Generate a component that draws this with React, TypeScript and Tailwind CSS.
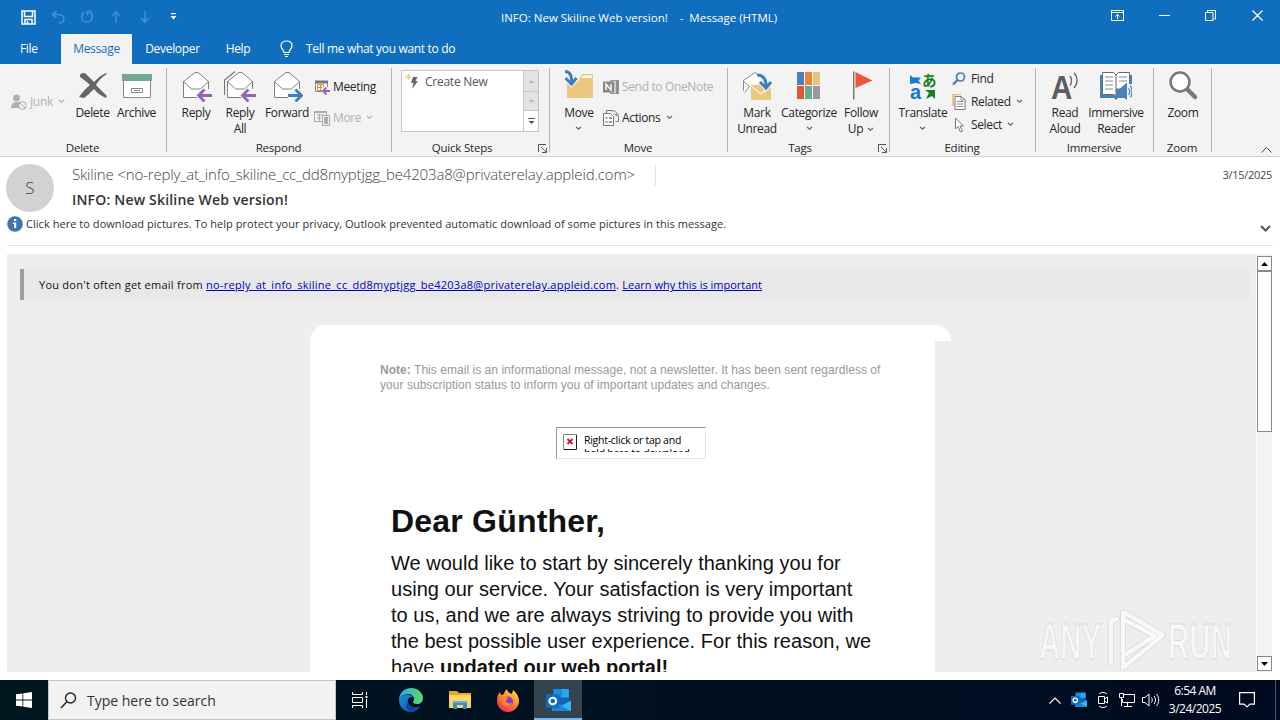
// src/App.tsx
import React from 'react';

interface BigButtonProps {
  icon: React.ReactNode;
  lines: string[];
  width: string;
  caret?: 'below' | 'inline';
}

const Caret: React.FC<{ className?: string }> = ({ className = 'text-[#666]' }) => (
  <svg width="7" height="5" viewBox="0 0 7 5" className={className} fill="none" stroke="currentColor" strokeWidth="1.2">
    <path d="M1 1l2.5 2.3L6 1" />
  </svg>
);

const BigButton: React.FC<BigButtonProps> = ({ icon, lines, width, caret }) => (
  <div className={`flex shrink-0 flex-col items-center pt-1.5 ${width}`}>
    <div className="h-8 w-8">{icon}</div>
    <div className="mt-[3px] flex flex-col items-center">
      {lines.map((line, i) => (
        <div key={line} className="flex items-center gap-1 whitespace-nowrap leading-4">
          {line}
          {caret === 'inline' && i === lines.length - 1 && <Caret />}
        </div>
      ))}
      {caret === 'below' && <div className="flex h-[14px] items-center"><Caret /></div>}
    </div>
  </div>
);

interface SmallButtonProps {
  icon: React.ReactNode;
  label: string;
  height: string;
  caret?: boolean;
  disabled?: boolean;
}

const SmallButton: React.FC<SmallButtonProps> = ({ icon, label, height, caret, disabled }) => (
  <div className={`flex items-center whitespace-nowrap ${height} ${disabled ? 'text-[#b1b1b1]' : ''}`}>
    <div className="mr-[3px] h-4 w-4 shrink-0">{icon}</div>
    <span>{label}</span>
    {caret && <span className="ml-[5px]"><Caret className={disabled ? 'text-[#b1b1b1]' : 'text-[#666]'} /></span>}
  </div>
);

interface GroupProps {
  title: string;
  width: string;
  padding?: string;
  launcher?: boolean;
  children: React.ReactNode;
}

const Group: React.FC<GroupProps> = ({ title, width, padding = 'pl-[7px]', launcher, children }) => (
  <div className={`relative flex shrink-0 flex-col ${width}`}>
    <div className={`flex h-[76px] ${padding}`}>{children}</div>
    <div className={`flex h-4 items-center justify-center text-[11.5px] tracking-[-0.2px] ${launcher ? 'pr-[18px]' : 'pr-0.5'}`}>{title}</div>
    {launcher && (
      <svg className="absolute right-[3px] bottom-[3px]" width="9" height="9" viewBox="0 0 9 9" fill="none" stroke="#555">
        <path d="M.5 8V.5H8M3 3l5 5M8.5 4v4.5H4" />
      </svg>
    )}
    <div className="absolute top-1 right-0 h-[84px] w-px bg-[#b5b5b5]" />
  </div>
);

// Ribbon icons

const Envelope: React.FC<{ arrow?: 'left' | 'right'; stacked?: boolean }> = ({ arrow, stacked }) => (
  <svg width="32" height="32" viewBox="0 0 32 32" fill="none">
    {stacked && <path d="M.5 25V10L11 1.500M2 27" stroke="#777" strokeWidth="1.200" />}
    <path d="M3.500 27.500v-16L15 2.500h3l10.500 9v16z" fill="#fff" stroke="#808080" />
    <path d="M3.500 11.500l8 7.500h9l8-7.500" stroke="#808080" />
    {arrow && <path d="M17 32v-9l4-4h10v13z" fill="#f3f3f3" />}
    {arrow === 'left' && (
      <path d="M32 25.500H18.500M24.500 19.500L18.500 25.500l6 6" stroke="#9560b8" strokeWidth="2.800" />
    )}
    {arrow === 'right' && (
      <path d="M17 25.500h13.500M24.500 19.500l6 6-6 6" stroke="#3e7ebd" strokeWidth="2.800" />
    )}
  </svg>
);

const DeleteIcon = () => (
  <svg width="32" height="32" viewBox="0 0 32 32">
    <path d="M3 5c1-2 4-3 6-1l8 8c4-4 7-7 12-9l1 1c-5 3-8 6-11 11l11 11-1 2c-5-2-9-5-12-9-4 4-7 7-10 9l-5-1c3-4 6-8 11-12C10 12 6 9 3 7z" fill="#666" />
  </svg>
);

const ArchiveIcon = () => (
  <svg width="32" height="32" viewBox="0 0 32 32">
    <path d="M2.500 10v17.500h27V10" fill="#fff" stroke="#888" />
    <path d="M1 4h30v7H1z" fill="#72a695" />
    <path d="M10.500 18.500h11v4h-11z" fill="#fff" stroke="#888" />
    <path d="M13 20.500h6" stroke="#888" />
  </svg>
);

const JunkIcon = () => (
  <svg width="16" height="16" viewBox="0 0 16 16">
    <circle cx="5.500" cy="4" r="3.500" fill="#b1b1b1" />
    <path d="M0 14c0-5 3-6 6-6 2 0 3 .5 4 1v5z" fill="#b1b1b1" />
    <circle cx="11.500" cy="11.500" r="3.800" fill="#f3f3f3" stroke="#aaa" />
    <path d="M9 9l5 5" stroke="#aaa" />
  </svg>
);

const MeetingIcon = () => (
  <svg width="16" height="16" viewBox="0 0 16 16">
    <path d="M1.500 3.500h12v9h-12z" fill="#fff" stroke="#888" />
    <path d="M1 1.500h13v3H1z" fill="#777" />
    <path d="M3.500 5.500h6v6h-6zM6.500 5v7M3 8.500h7" fill="none" stroke="#d98b3c" />
    <path d="M8 8h8v8H8z" fill="#f3f3f3" />
    <path d="M16 12H9.500M12.500 8.500L9 12l3.500 3.500" fill="none" stroke="#9560b8" strokeWidth="1.800" />
  </svg>
);

const MoreIcon = () => (
  <svg width="16" height="16" viewBox="0 0 16 16" fill="none" stroke="#aaa">
    <path d="M.5 1.500h12v10H.5zM3 5h7M3 8h4M5.500 4v7M1 2.500h11" />
    <path d="M8.500 5.500h7v10h-7z" fill="#f3f3f3" />
    <path d="M10.500 7.500h3v6h-3z" fill="#aaa" />
  </svg>
);

const MoveIcon = () => (
  <svg width="32" height="32" viewBox="0 0 32 32">
    <path d="M4 28h26V4H19l-4 8H4z" fill="#ecc87f" />
    <path d="M20 5.500h9V8H18.500z" fill="#fff" />
    <path d="M2 1c5 0 7 4 6.500 12M2.500 8l6 6 5-6" fill="none" stroke="#f3f3f3" strokeWidth="5" />
    <path d="M2 1.500c5 0 7 4 6.500 12M2.500 8l6 6 5-6" fill="none" stroke="#3e7ebd" strokeWidth="3" />
  </svg>
);

const OneNoteIcon = () => (
  <svg width="16" height="16" viewBox="0 0 16 16">
    <path d="M7.500 1.500h8v13h-8z" fill="#ccc" stroke="#999" />
    <path d="M0 2.500h11v11H0z" fill="#888" />
    <path d="M3 11V5l5 6V5" fill="none" stroke="#fff" strokeWidth="1.400" />
    <path d="M14.200 1v14" stroke="#888" strokeWidth="2" />
  </svg>
);

const ActionsIcon = () => (
  <svg width="16" height="16" viewBox="0 0 16 16" fill="none" stroke="#777">
    <path d="M.5 3.500h7l3 3v9H.5z" fill="#fff" />
    <path d="M2.500 8h2M6 8h3M2.500 12h2M6 12h3" strokeWidth="1.500" />
    <path d="M3.500 3V.5h6M12.500 11.500h3V6M8 1c4-1 6 1 6 4.500M11 3.500L14 6l2-2.500" />
  </svg>
);

const MarkUnreadIcon = () => (
  <svg width="32" height="32" viewBox="0 0 32 32">
    <path d="M2.500 20.500v-10L14 2.500l9 6" fill="#fff" stroke="#888" />
    <path d="M2.500 20.500v-9l6 5-5 6" fill="#fff" stroke="#888" />
    <path d="M10 15h20v15H10z" fill="#ecc87f" />
    <path d="M10 16l10 8 10-8" fill="none" stroke="#fbf1dc" strokeWidth="1.500" />
    <path d="M16 5c6 0 9 4 9 11M19 12l6 6 5-6" fill="none" stroke="#f3f3f3" strokeWidth="5" />
    <path d="M16 5c6 0 9 4 9 11M19 12l6 6 5-6" fill="none" stroke="#3e7ebd" strokeWidth="3" />
  </svg>
);

const CategorizeIcon = () => (
  <svg width="32" height="32" viewBox="0 0 32 32">
    <path d="M4 2h7v13H4z" fill="#4a80bd" />
    <path d="M12 2h7v13h-7z" fill="#e8873a" />
    <path d="M20 2h7v13h-7z" fill="#e6c27c" />
    <path d="M4 16h7v13H4z" fill="#dd5738" />
    <path d="M12 16h7v13h-7z" fill="#6ca894" />
    <path d="M20 16h7v13h-7z" fill="#999" />
  </svg>
);

const FlagIcon = () => (
  <svg width="32" height="32" viewBox="0 0 32 32">
    <path d="M8 1.500h1.500v28H8z" fill="#777" />
    <path d="M10.500 2l17 8.500-17 7.500z" fill="#e8593b" />
  </svg>
);

const TranslateIcon = () => (
  <svg className="overflow-visible" width="32" height="32" viewBox="0 0 32 32">
    <path d="M3 5l3 2.500h8l-2.500 3L14 14l-5-1-6 1z" fill="#1679d3" />
    <path d="M18 20h10v9l-3-3-6 3 3-6z" fill="#128022" />
    <text x="15" y="15.500" fontSize="14.500" fontWeight="700" fill="#128022" fontFamily="Noto Sans CJK JP, sans-serif">あ</text>
    <text x="3" y="29" fontSize="20" fontWeight="600" fill="#1679d3" fontFamily="Liberation Sans, sans-serif">a</text>
  </svg>
);

const FindIcon = () => (
  <svg width="16" height="16" viewBox="0 0 16 16" fill="none">
    <circle cx="8.500" cy="6" r="4" stroke="#4a79ad" strokeWidth="1.700" />
    <path d="M5.500 9L1 13.500" stroke="#4a79ad" strokeWidth="2.300" />
  </svg>
);

const RelatedIcon = () => (
  <svg width="16" height="16" viewBox="0 0 16 16" fill="none">
    <path d="M1 12V.5H9" stroke="#e5b878" strokeWidth="1.500" />
    <path d="M3 2.500h6l4 3v10H3z" fill="#fff" stroke="#777" />
    <path d="M5 7.500h6M5 10h6M5 12.500h6M9 3v3h4" stroke="#888" />
  </svg>
);

const SelectIcon = () => (
  <svg width="16" height="16" viewBox="0 0 16 16">
    <path d="M3.500 1v11L6 9.500 8.500 15l2-1L8 9h3.500z" fill="#fff" stroke="#777" />
  </svg>
);

const ReadAloudIcon = () => (
  <svg className="overflow-visible" width="32" height="32" viewBox="0 0 32 32">
    <text x="2" y="28.500" fontSize="33" fontWeight="700" fill="#5e5e5e" fontFamily="Liberation Sans, sans-serif" textLength="21" lengthAdjust="spacingAndGlyphs">A</text>
    <path d="M21 6c2 2.500 2 7 0 9.500M25 3c4 4 4 11 0 15" fill="none" stroke="#666" strokeWidth="1.300" />
  </svg>
);

const ReaderIcon = () => (
  <svg width="32" height="32" viewBox="0 0 32 32">
    <path d="M0 5h32v23H18l-2 2-2-2H0z" fill="#4a80b8" />
    <path d="M2.500 2.500h11L16 5l2.500-2.500h11v22h-11L16 26l-2.500-1.500h-11z" fill="#fff" stroke="#666" />
    <path d="M16 5v20" stroke="#666" />
    <path d="M5 7h8M5 11h8M5 15h8M5 19h8M19 7h8M19 11h8" stroke="#888" />
    <path d="M25 14h7v17h-7z" fill="#f3f3f3" />
    <path d="M16 18.500h4l7-6V30l-7-5h-4z" fill="#4a80b8" />
    <path d="M28.500 18c1.500 2 1.500 5 0 7M30.500 15.500c2 4 2 8 0 12" fill="none" stroke="#4a80b8" strokeWidth="1.200" />
  </svg>
);

const ZoomIcon = () => (
  <svg width="32" height="32" viewBox="0 0 32 32">
    <path d="M20 19l8 8" stroke="#777" strokeWidth="4.500" strokeLinecap="round" />
    <circle cx="13" cy="12" r="9.500" fill="#fff" stroke="#777" strokeWidth="2.500" />
  </svg>
);

// Taskbar icons

const OutlookIcon: React.FC<{ size: number }> = ({ size }) => (
  <svg width={size} height={size} viewBox="0 0 24 24">
    <path d="M7 1h15v17H7z" fill="#1066b5" />
    <path d="M7 1h8v8H7z" fill="#1490df" />
    <path d="M15 1h7v8h-7z" fill="#28a8ea" />
    <path d="M6 12l9 5 9-5v10H6z" fill="#35b8f1" />
    <path d="M6 13l18 9H6z" fill="#1a86d9" />
    <path d="M0 6h13v13H0z" fill="#0f6cbd" />
    <circle cx="6.500" cy="12.500" r="3.200" fill="none" stroke="#fff" strokeWidth="2" />
  </svg>
);

const EdgeIcon = () => (
  <svg width="24" height="24" viewBox="0 0 24 24">
    <defs>
      <linearGradient id="edgeTop" x1="0" y1=".3" x2="1" y2=".4">
        <stop offset="0" stopColor="#2ba9e8" />
        <stop offset="1" stopColor="#5fd866" />
      </linearGradient>
      <linearGradient id="edgeLow" x1="0" y1="0" x2="1" y2="1">
        <stop offset="0" stopColor="#1b8ee0" />
        <stop offset="1" stopColor="#114a9b" />
      </linearGradient>
    </defs>
    <path d="M0 12C0 5 5 0 12 0s12 5 12 10c0 4-3 6-6 6-3 0-4-1-4-2s1-1 1-3c0-3-3-5-6-5-4 0-8 2-9 6z" fill="url(#edgeTop)" />
    <path d="M0 12C1 8 4 6.500 8 6.500c3 0 5 1 6 3-4-1-6 2-5 5 1 4 6 6 12 4-2 3-5 5.500-9 5.500C5 24 0 19 0 12z" fill="url(#edgeLow)" />
    <path d="M9 14c1 5 7 7 12.500 4.500C19 22 16 24 12 24c-5-2-6-7-3-10z" fill="#0d4a97" />
  </svg>
);

const ExplorerIcon = () => (
  <svg width="22" height="20" viewBox="0 0 22 20">
    <path d="M0 1h8l2 2h12v15H0z" fill="#e9a820" />
    <path d="M0 5h22v13H0z" fill="#fcd462" />
    <path d="M4 19v-7h14v7h-4v-4H8v4z" fill="#3a8bc9" />
    <path d="M4 11h14v2H4z" fill="#62b0e2" />
  </svg>
);

const FirefoxIcon = () => (
  <svg width="24" height="24" viewBox="0 0 24 24">
    <defs>
      <linearGradient id="fox" x1=".8" y1="0" x2=".2" y2="1">
        <stop offset="0" stopColor="#ffe345" />
        <stop offset=".45" stopColor="#ff8a22" />
        <stop offset="1" stopColor="#ef2160" />
      </linearGradient>
    </defs>
    <path d="M1 13c0-4 1-7 3-9l1 3 3-1c0-2 2-4 3-5 0 2 2 4 5 5l1-4c4 3 6 7 6 11 0 6-5 11-11 11S1 19 1 13z" fill="url(#fox)" />
    <circle cx="12" cy="13.500" r="5" fill="#8439d2" />
    <path d="M6 9c3-1 5 0 7 1-2 1-3 1-3 3s3 3 6 2c-1 4-8 5-10 0-1-2-1-4 0-6z" fill="#ff8a22" />
  </svg>
);

const WindowsIcon = () => (
  <svg width="16" height="16" viewBox="0 0 16 16" fill="#fff">
    <path d="M0 2.300l6.500-.9v6.200H0zM7.300 1.300L16 0v7.600H7.300zM0 8.400h6.500v6.200L0 13.700zM7.300 8.400H16V16l-8.700-1.300z" />
  </svg>
);

const TitleBar = () => (
  <div className="relative flex h-[34px] items-center justify-between text-white">
    <div className="flex pl-[14px] text-[#3c8fdc]">
      <div className="flex w-[29px] justify-center">
        <svg width="15" height="15" viewBox="0 0 15 15" fill="none" stroke="#fff" strokeWidth="1.500">
          <path d="M1 1h13v13H1zM3.500 1v5.500h8V1M4 14v-4.500h7V14M6.500 11v3" />
        </svg>
      </div>
      <div className="flex w-[29px] justify-center">
        <svg width="14" height="14" viewBox="0 0 14 14" fill="none" stroke="currentColor" strokeWidth="1.700">
          <path d="M5.500 1L1.500 4.500l4 3.500M2 4.500h6c3 0 5 2 5 4.300S11 13 8 13" />
        </svg>
      </div>
      <div className="flex w-[29px] justify-center">
        <svg width="14" height="14" viewBox="0 0 14 14" fill="none" stroke="currentColor" strokeWidth="1.700">
          <path d="M4 2.500a5.300 5.300 0 1 0 6 0M7.500 5.500V1.500H12" />
        </svg>
      </div>
      <div className="flex w-[29px] justify-center">
        <svg width="12" height="14" viewBox="0 0 12 14" fill="none" stroke="currentColor" strokeWidth="1.600">
          <path d="M6 13V2M2 6l4-4 4 4" />
        </svg>
      </div>
      <div className="flex w-[29px] justify-center">
        <svg width="12" height="14" viewBox="0 0 12 14" fill="none" stroke="currentColor" strokeWidth="1.600">
          <path d="M6 1v11M2 8l4 4 4-4" />
        </svg>
      </div>
      <div className="flex w-[29px] items-center justify-center">
        <svg width="7" height="8" viewBox="0 0 7 8" fill="#fff">
          <path d="M1 0h5v1.200H1zM.5 3h6L3.500 6.500z" />
        </svg>
      </div>
    </div>
    <div className="absolute top-[9px] left-[501px] whitespace-pre text-[11.5px] leading-[18px]">INFO: New Skiline Web version!    -  Message (HTML)</div>
    <div className="mr-[17px] mb-1 flex items-center">
      <svg className="mr-[35px]" width="13" height="11" viewBox="0 0 13 11" fill="none" stroke="#fff">
        <path d="M.5.5h12v10H.5zM1 2.500h11M6.500 9V4.500M4.500 6.500l2-2 2 2" />
      </svg>
      <svg className="mr-[35px]" width="11" height="11" viewBox="0 0 11 11" stroke="#fff">
        <path d="M0 5.500h11" />
      </svg>
      <svg className="mr-[36px]" width="11" height="11" viewBox="0 0 11 11" fill="none" stroke="#fff">
        <path d="M.5 2.500h7.500v8H.5zM2.500 2V.5h8V9H8.500" />
      </svg>
      <svg width="11" height="11" viewBox="0 0 11 11" stroke="#fff" strokeWidth="1.200">
        <path d="M.5.5l10 10M10.500.5l-10 10" />
      </svg>
    </div>
  </div>
);

const Tabs = () => (
  <div className="flex h-[30px] items-center tracking-[-0.32px] text-white">
    <div className="w-[61px] pl-5">File</div>
    <div className="flex h-full w-[71px] items-center justify-center bg-[#f3f3f3] text-[#1a6cb8]">Message</div>
    <div className="w-[81px] text-center">Developer</div>
    <div className="w-[50px] text-center">Help</div>
    <svg className="ml-[17px]" width="13" height="18" viewBox="0 0 13 18" fill="none" stroke="#fff" strokeWidth="1.200">
      <path d="M4 12.500c0-2.500-3-3.500-3-7C1 2.500 3.500 1 6.500 1S12 2.500 12 5.500c0 3.500-3 4.500-3 7zM4 14.500h5M5 16.500h3" />
    </svg>
    <div className="ml-[13px] whitespace-nowrap">Tell me what you want to do</div>
  </div>
);

const Ribbon = () => (
  <div className="relative flex h-[93px] border-b border-[#d2d0ce] bg-[#f3f3f3] tracking-[-0.35px]">
    <Group title="Delete" width="w-[167px]" padding="pl-[11px]">
      <div className="w-[55px] pt-[22px]">
        <SmallButton icon={<JunkIcon />} label="Junk" height="h-[31px]" caret disabled />
      </div>
      <BigButton icon={<DeleteIcon />} lines={['Delete']} width="w-[53px]" />
      <BigButton icon={<ArchiveIcon />} lines={['Archive']} width="w-[35px]" />
    </Group>
    <Group title="Respond" width="w-[225px]">
      <BigButton icon={<Envelope arrow="left" />} lines={['Reply']} width="w-[44px]" />
      <BigButton icon={<Envelope arrow="left" stacked />} lines={['Reply', 'All']} width="w-[44px]" />
      <BigButton icon={<Envelope arrow="right" />} lines={['Forward']} width="w-[50px]" />
      <div className="pt-[7px] pl-0.5">
        <SmallButton icon={<MeetingIcon />} label="Meeting" height="h-[31px]" />
        <SmallButton icon={<MoreIcon />} label="More" height="h-[31px]" caret disabled />
      </div>
    </Group>
    <Group title="Quick Steps" width="w-[158px]" padding="pl-[9px] pt-1.5" launcher>
      <div className="flex h-[62px] w-[138px] border border-[#c6c6c6] bg-white">
        <div className="flex grow items-start gap-1 pt-[3px] pl-[3px] text-[#555]">
          <svg width="16" height="16" viewBox="0 0 16 16">
            <path d="M8 3h4.500l-2 4H13l-6 8 1.500-6H6z" fill="#666" />
            <path d="M3.500 0v6M.5 3h6M1.500 1l4 4M5.500 1l-4 4" stroke="#ecca8f" />
          </svg>
          <span className="leading-4 tracking-[-0.25px]">Create New</span>
        </div>
        <div className="flex w-[15px] flex-col border-l border-[#c6c6c6] text-[#b5b5b5]">
          <div className="flex h-5 items-center justify-center bg-[#e3e3e3]">
            <svg width="5" height="3" viewBox="0 0 5 3" fill="currentColor"><path d="M0 3L2.500 0 5 3z" /></svg>
          </div>
          <div className="flex h-5 items-center justify-center border-y border-[#c6c6c6] bg-[#e3e3e3]">
            <svg width="5" height="3" viewBox="0 0 5 3" fill="currentColor"><path d="M0 0h5L2.500 3z" /></svg>
          </div>
          <div className="flex grow items-center justify-center text-[#555]">
            <svg width="7" height="7" viewBox="0 0 7 7" fill="currentColor"><path d="M0 0h7v1H0zM.5 3h6l-3 3z" /></svg>
          </div>
        </div>
      </div>
    </Group>
    <Group title="Move" width="w-[178px]">
      <BigButton icon={<MoveIcon />} lines={['Move']} width="w-[44px]" caret="below" />
      <div className="pt-[7px] pl-0.5">
        <SmallButton icon={<OneNoteIcon />} label="Send to OneNote" height="h-[31px]" disabled />
        <SmallButton icon={<ActionsIcon />} label="Actions" height="h-[31px]" caret />
      </div>
    </Group>
    <Group title="Tags" width="w-[162px]" launcher>
      <BigButton icon={<MarkUnreadIcon />} lines={['Mark', 'Unread']} width="w-[44px]" />
      <BigButton icon={<CategorizeIcon />} lines={['Categorize']} width="w-[60px]" caret="below" />
      <BigButton icon={<FlagIcon />} lines={['Follow', 'Up']} width="w-[44px]" caret="inline" />
    </Group>
    <Group title="Editing" width="w-[146px]">
      <BigButton icon={<TranslateIcon />} lines={['Translate']} width="w-[52px]" caret="below" />
      <div className="pt-[3px] pl-[3px]">
        <SmallButton icon={<FindIcon />} label="Find" height="h-[23px]" />
        <SmallButton icon={<RelatedIcon />} label="Related" height="h-[23px]" caret />
        <SmallButton icon={<SelectIcon />} label="Select" height="h-[23px]" caret />
      </div>
    </Group>
    <Group title="Immersive" width="w-[118px]">
      <BigButton icon={<ReadAloudIcon />} lines={['Read', 'Aloud']} width="w-[44px]" />
      <BigButton icon={<ReaderIcon />} lines={['Immersive', 'Reader']} width="w-[58px]" />
    </Group>
    <Group title="Zoom" width="w-[58px]">
      <BigButton icon={<ZoomIcon />} lines={['Zoom']} width="w-[44px]" />
    </Group>
    <svg className="absolute right-2 bottom-[3px]" width="11" height="6" viewBox="0 0 11 6" fill="none" stroke="#444">
      <path d="M.5 5.500l5-5 5 5" />
    </svg>
  </div>
);

const MessageHeader = () => (
  <div className="mx-[7px] h-[89px] border-b border-[#e1e1e1]">
    <div className="flex h-[55px] pt-[7px]">
      <div className="-ml-px flex h-12 w-12 items-center justify-center rounded-full bg-[#d2d2d2] text-[17px] font-light text-[#444]">S</div>
      <div className="ml-[18px] grow">
        <div className="flex items-center">
          <div className="flex h-[22px] w-[584px] items-center border-r border-[#e6e6e6] pb-0.5 text-[15px] font-light tracking-[-0.16px] whitespace-nowrap text-[#444]">
            Skiline &lt;no-reply_at_info_skiline_cc_dd8myptjgg_be4203a8@privaterelay.appleid.com&gt;
          </div>
          <div className="grow pr-px text-right text-[11px] tracking-[-0.3px] text-[#444]">3/15/2025</div>
        </div>
        <div className="mt-1 text-[14px] leading-5 font-semibold tracking-[0.18px] text-[#333]">INFO: New Skiline Web version!</div>
      </div>
    </div>
    <div className="flex h-6 items-center">
      <svg width="16" height="16" viewBox="0 0 16 16">
        <circle cx="8" cy="8" r="7.800" fill="#3f75b0" />
        <path d="M7 3h2.200v2H7zM6 6.500h3.200V12H7V8H6z" fill="#fff" />
      </svg>
      <div className="ml-[3px] grow text-[11px] tracking-[0.045px] whitespace-nowrap text-[#333]">
        Click here to download pictures. To help protect your privacy, Outlook prevented automatic download of some pictures in this message.
      </div>
      <svg className="mt-2.5 mr-0.5" width="11" height="8" viewBox="0 0 11 8" fill="none" stroke="#555" strokeWidth="2">
        <path d="M1 1l4.500 4.500L10 1" />
      </svg>
    </div>
  </div>
);

const Watermark = () => (
  <svg className="absolute right-[19px] bottom-0" width="200" height="66" viewBox="0 0 200 66">
    <g fontFamily="Liberation Sans, sans-serif" fontSize="50" fontWeight="700" fill="#f7f7f7" stroke="#d9d9d9" strokeWidth=".8">
      <text x="2" y="53" textLength="62" lengthAdjust="spacingAndGlyphs">ANY</text>
      <text x="131" y="53" textLength="64" lengthAdjust="spacingAndGlyphs">RUN</text>
    </g>
    <g fill="none" strokeLinejoin="round" strokeLinecap="round">
      <path d="M74 57V15l6-2M86 47V6l40 23-40 33V50l32-20-32-17" stroke="#d6d6d6" strokeWidth="6" />
      <path d="M74 57V15l6-2M86 47V6l40 23-40 33V50l32-20-32-17" stroke="#f8f8f8" strokeWidth="4.500" />
    </g>
  </svg>
);

const Scrollbar = () => (
  <div className="flex w-[15px] flex-col bg-[#f3f3f3] pt-0.5 pb-px">
    <div className="flex h-[15px] items-center justify-center border border-[#888] bg-white">
      <svg width="7" height="4" viewBox="0 0 7 4"><path d="M0 4l3.500-4L7 4z" /></svg>
    </div>
    <div className="h-[161px] border border-[#888] bg-white" />
    <div className="mt-auto flex h-[15px] items-center justify-center border border-[#888] bg-white">
      <svg width="7" height="4" viewBox="0 0 7 4"><path d="M0 0h7L3.500 4z" /></svg>
    </div>
  </div>
);

const MessageBody = () => (
  <div className="mt-2 ml-[7px] flex h-[418px] gap-px">
    <div className="relative w-[1249px] overflow-hidden bg-[#eee] pt-[15px]">
      <div className="mr-[7px] ml-[13px] flex h-[31px] items-center border-l-4 border-[#a0a0a0] bg-[#e8e8e8] pt-0.5 pl-[15px] text-[11px] tracking-[0.25px] whitespace-pre text-[#111]">
        You don't often get email from <span className="text-[#0000b8] underline">no-reply_at_info_skiline_cc_dd8myptjgg_be4203a8@privaterelay.appleid.com</span>. <span className="tracking-normal text-[#0000b8] underline">Learn why this is important</span>
      </div>
      <div className="mt-[25px] ml-[303px] flex items-start">
        <div className="h-[500px] w-[625px] shrink-0 rounded-tl-2xl bg-white pt-[38px] font-['Liberation_Sans',Arial,sans-serif]">
          <div className="pl-[70px] text-[12px] leading-[15px] tracking-[0.04px] whitespace-nowrap text-[#999]">
            <div><b>Note:</b> This email is an informational message, not a newsletter. It has been sent regardless of</div>
            <div>your subscription status to inform you of important updates and changes.</div>
          </div>
          <div className="mt-[34px] ml-[246px] flex h-8 w-[150px] overflow-hidden border border-[#e6e6e6] border-t-[#999] border-l-[#999] p-1.5">
            <svg className="shrink-0" width="14" height="16" viewBox="0 0 14 16" fill="none">
              <path d="M.5 15V.5H13" stroke="#888" />
              <path d="M.5 15.500h13V.5" stroke="#222" />
              <path d="M4.500 5l5 5M9.500 5l-5 5" stroke="#d3122c" strokeWidth="1.800" />
            </svg>
            <div className="ml-[7px] h-[18px] overflow-hidden font-['Open_Sans',sans-serif] text-[10.500px] leading-[13px] tracking-[-0.26px] whitespace-nowrap text-black">
              Right-click or tap and
              <br />
              hold here to download
            </div>
          </div>
          <div className="mt-[42px] ml-[81px] text-[#111]">
            <div className="text-[32px] leading-10 font-bold tracking-[0.2px] whitespace-nowrap">Dear Günther,</div>
            <div className="mt-[9px] text-[20px] leading-[26px] tracking-[0.02px] whitespace-nowrap">
              We would like to start by sincerely thanking you for
              <br />
              using our service. Your satisfaction is very important
              <br />
              to us, and we are always striving to provide you with
              <br />
              the best possible user experience. For this reason, we
              <br />
              have <b>updated our web portal!</b>
            </div>
          </div>
        </div>
        <div className="h-4 w-4 rounded-tr-2xl bg-white" />
      </div>
      <Watermark />
    </div>
    <Scrollbar />
  </div>
);

const Taskbar = () => (
  <div className="mt-2 flex h-10 items-center bg-linear-to-r from-[#00161f] to-[#000a20] text-white">
    <div className="flex w-12 justify-center"><WindowsIcon /></div>
    <div className="flex h-10 w-72 items-center border border-[#c4c4c4] bg-[#f2f2f2] pl-[11px] text-[14px] text-[#333]">
      <svg className="mr-[10px]" width="17" height="17" viewBox="0 0 17 17" fill="none" stroke="#222" strokeWidth="1.400">
        <circle cx="10.500" cy="6" r="5" />
        <path d="M7 9.500L1 16" />
      </svg>
      <span>Type here to search</span>
    </div>
    <div className="flex w-12 justify-center">
      <svg width="16" height="16" viewBox="0 0 16 16" fill="none" stroke="#fff">
        <path d="M.5 0v2.500h10V0M.5 5.500h10v5H.5zM.5 16v-2.500h10V16M14.500 0v3M14.500 7v9" />
        <path d="M13.500 4h2v2h-2z" fill="#fff" stroke="none" />
      </svg>
    </div>
    <div className="flex w-[54px] justify-center"><EdgeIcon /></div>
    <div className="flex w-[44px] justify-center"><ExplorerIcon /></div>
    <div className="flex w-[52px] justify-center"><FirefoxIcon /></div>
    <div className="flex h-10 w-12 items-center justify-center border-b-2 border-[#76b9ed] bg-[#33444f] pt-0.5"><OutlookIcon size={25} /></div>
    <div className="ml-auto flex items-center">
      <svg width="12" height="7" viewBox="0 0 12 7" fill="none" stroke="#fff" strokeWidth="1.200"><path d="M.5 6.500L6 1l5.500 5.500" /></svg>
      <div className="ml-[10px]"><OutlookIcon size={16} /></div>
      <svg className="ml-[10px]" width="12" height="16" viewBox="0 0 12 16" fill="none" stroke="#fff">
        <path d="M1.500 4.500h6v7h-6zM7.500 7l3-2v6l-3-2M2 2c2-2 6-2 8 0M2 14c2 2 6 2 8 0" />
      </svg>
      <svg className="ml-[10px]" width="16" height="14" viewBox="0 0 16 14" fill="none" stroke="#fff">
        <path d="M5 1.500h10.500v8H3.500V6M8.500 10v3M5 13.500h8M.5.5h4v4h-4zM2.500 5v8" />
      </svg>
      <svg className="ml-[7px]" width="18" height="14" viewBox="0 0 18 14" fill="none" stroke="#fff">
        <path d="M.5 4.500H3L7 1v12L3 9.500H.5zM9.500 4.500c1 1.500 1 3.500 0 5M12 3c2 2.500 2 5.500 0 8M14.500 1c3 3.500 3 8.500 0 12" />
      </svg>
      <div className="ml-[8px] w-[54px] text-center text-[12px] leading-[18px] tracking-[-0.5px] whitespace-nowrap">
        <div>6:54 AM</div>
        <div>3/24/2025</div>
      </div>
      <svg className="ml-[17px]" width="16" height="16" viewBox="0 0 16 16" fill="none" stroke="#fff" strokeWidth="1.200">
        <path d="M.6.6h14.800v11.500H11L8 15l-3-2.900H.6z" />
      </svg>
      <div className="mr-1 ml-5 h-10 w-px bg-[#4a5566]" />
    </div>
  </div>
);

const App: React.FC = () => {
  return (
    <div className="h-[720px] w-[1280px] overflow-hidden bg-white font-['Open_Sans','Noto_Sans',sans-serif] text-[12px] text-[#262626]">
      <div className="bg-[#106ebe]">
        <TitleBar />
        <Tabs />
      </div>
      <Ribbon />
      <MessageHeader />
      <MessageBody />
      <Taskbar />
    </div>
  );
};

export default App;
